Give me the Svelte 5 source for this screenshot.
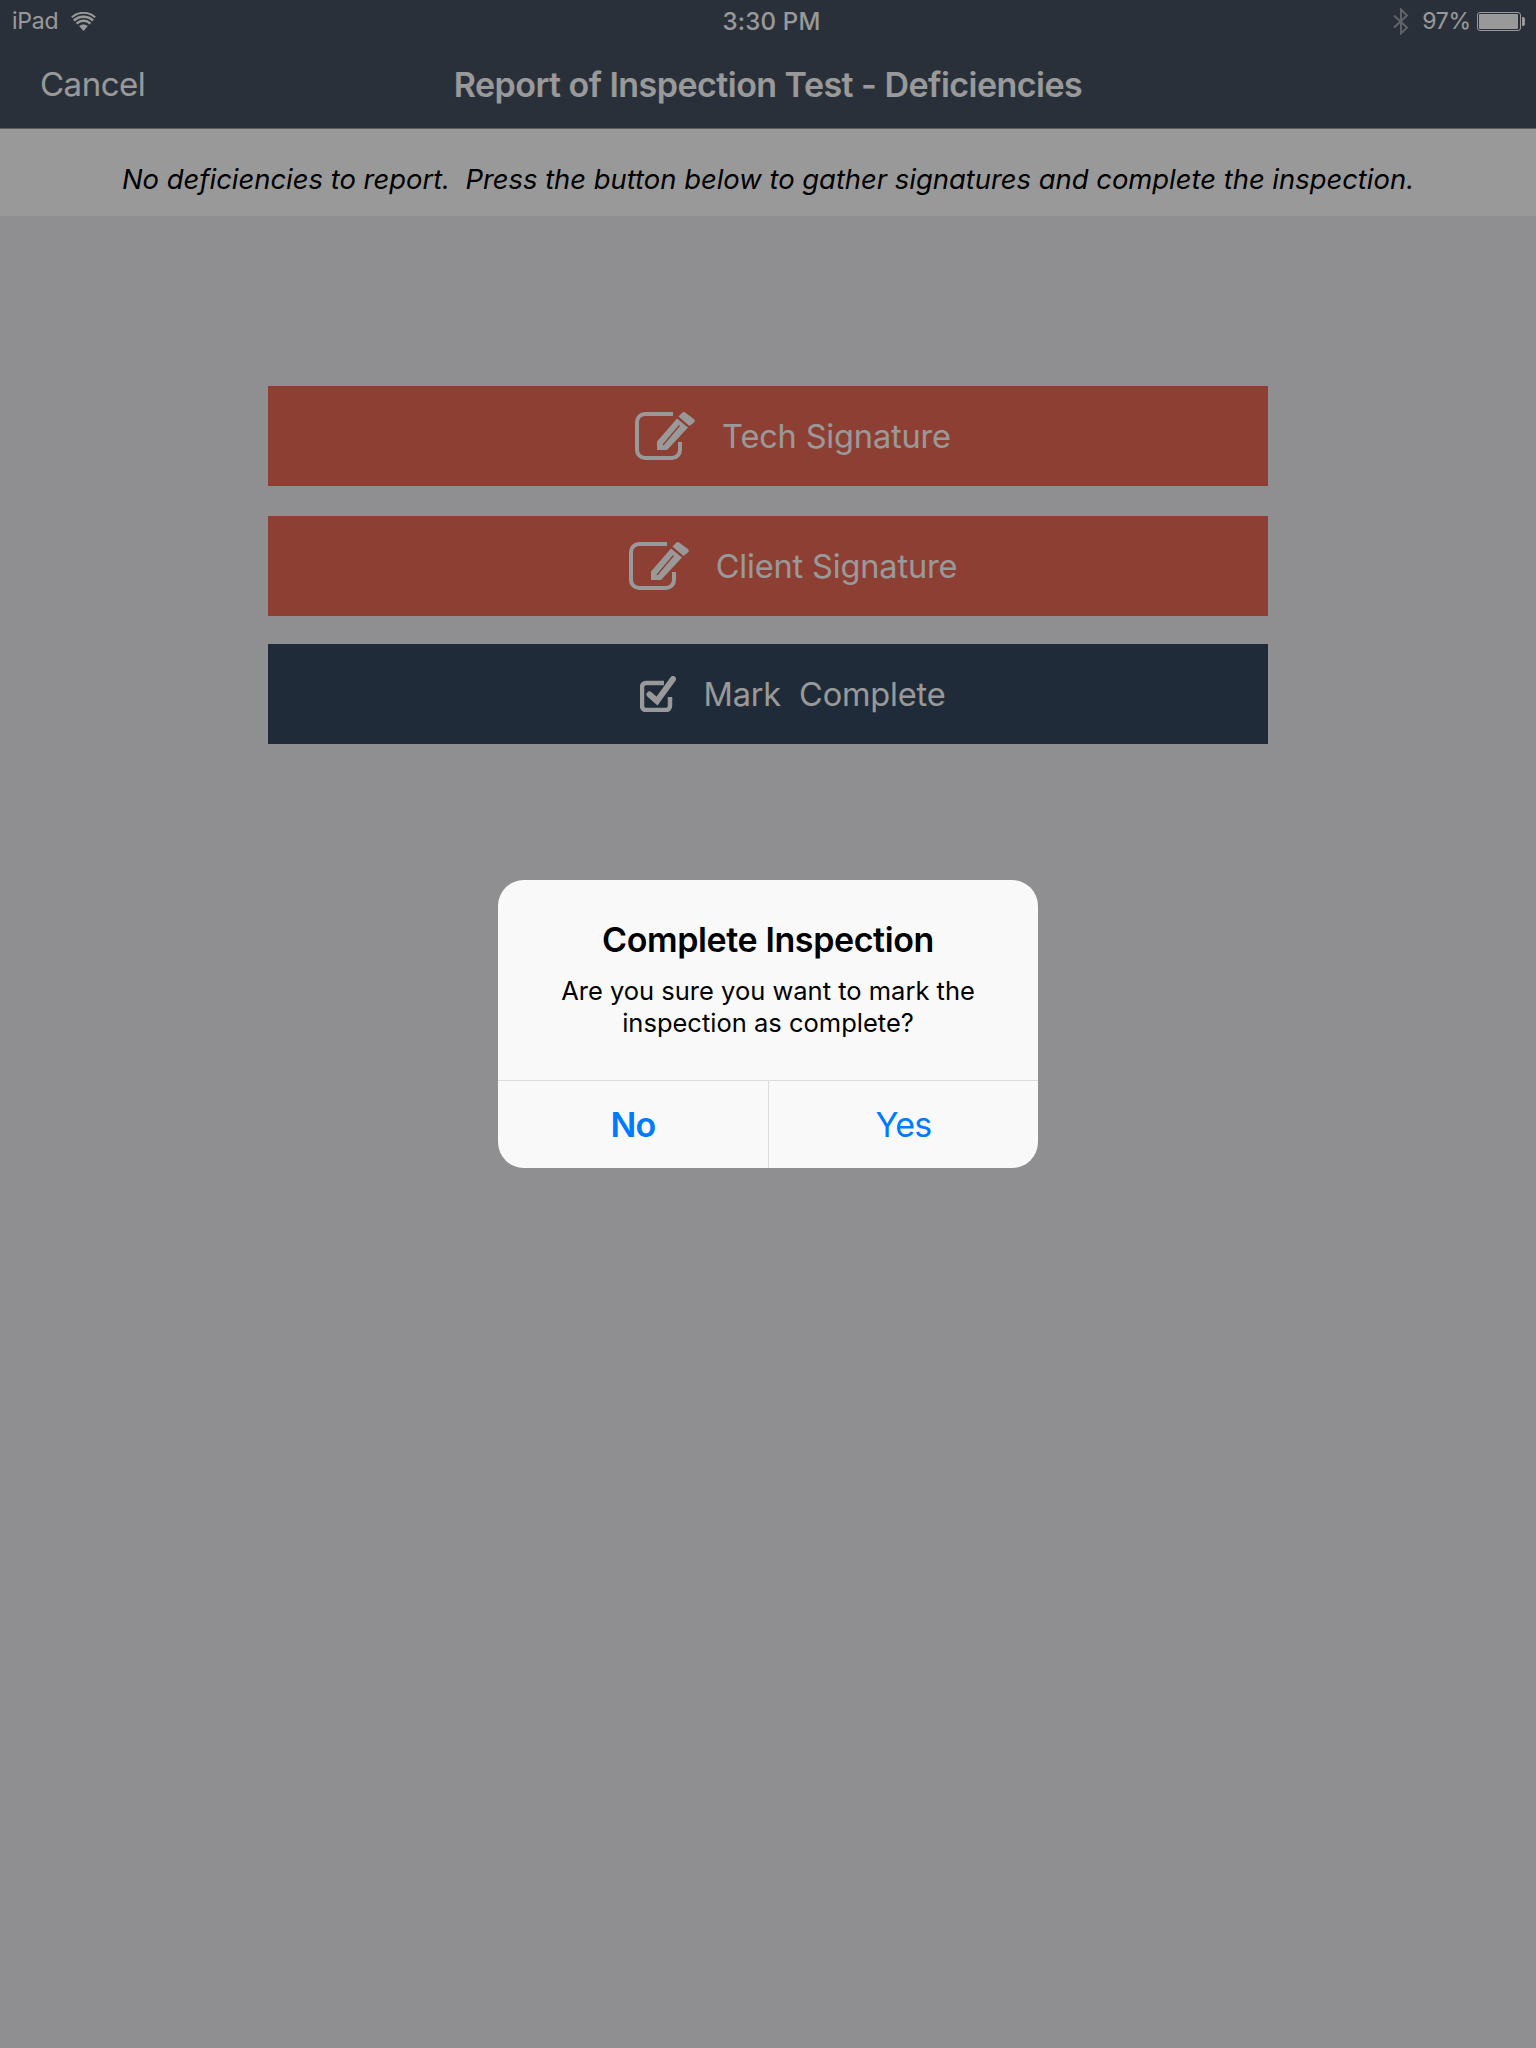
<script lang="ts">
  let showDialog = $state(true);

  const actions = [
    { label: 'Tech Signature', icon: 'edit', tone: 'red' },
    { label: 'Client Signature', icon: 'edit', tone: 'red' },
    { label: 'Mark  Complete', icon: 'check', tone: 'navy' }
  ];
</script>

<div class="page">
  <header class="top">
    <div class="status">
      <div class="status-left">
        <span>iPad</span>
        <svg class="wifi" width="25" height="19" viewBox="0 0 24 18">
          <path d="M12 18L7.800 13.400C10.200 11.300 13.800 11.300 16.200 13.400Z" fill="currentColor" />
          <path d="M5.400 11C9.200 7.500 14.800 7.500 18.600 11" fill="none" stroke="currentColor" stroke-width="2.400" />
          <path d="M2.800 8C8 3.200 16 3.200 21.200 8" fill="none" stroke="currentColor" stroke-width="2.400" />
          <path d="M.8 5C7.200-.8 16.800-.8 23.200 5" fill="none" stroke="currentColor" stroke-width="2" />
        </svg>
      </div>
      <span class="time">3:30 PM</span>
      <div class="status-right">
        <svg class="bt" width="18" height="27" viewBox="0 0 18 27">
          <path d="M2 7.500L15 19.500L9 25.500V1.500L15 7.500L2 19.500" fill="none" stroke="currentColor" stroke-width="2" />
        </svg>
        <span class="pct">97%</span>
        <div class="battery"><div class="level"></div></div>
      </div>
    </div>
    <div class="nav">
      <span class="cancel">Cancel</span>
      <span class="title">Report of Inspection Test - Deficiencies</span>
    </div>
  </header>

  <div class="notice">No deficiencies to report.  Press the button below to gather signatures and complete the inspection.</div>

  <main class="actions">
    {#each actions as action}
      <button class="action {action.tone}">
        {#if action.icon === 'edit'}
          <svg width="60" height="48" viewBox="0 0 60 48">
            <path d="M38 2H10a8 8 0 0 0-8 8V38a8 8 0 0 0 8 8H37a8 8 0 0 0 8-8V30" fill="none" stroke="currentColor" stroke-width="4" />
            <path fill-rule="evenodd" d="M22 38V29.500L42 6.500L53 15.500L32 38ZM27.500 32.500L44 13L45 14L28.500 33.500Z" fill="currentColor" />
            <path d="M43.500 4.500L47.500.5C48.500-.2 49.500 0 50.500.8L58.800 7C60 8 60.200 9.200 59.200 10.200L54.500 14Z" fill="currentColor" />
          </svg>
        {:else}
          <svg width="36" height="36" viewBox="0 0 36 36">
            <path d="M24 7H6a4 4 0 0 0-4 4V30a4 4 0 0 0 4 4H26a4 4 0 0 0 4-4V21" fill="none" stroke="currentColor" stroke-width="4.500" />
            <path d="M9.500 18.500L17 25L33 3" fill="none" stroke="currentColor" stroke-width="6" stroke-linecap="round" />
          </svg>
        {/if}
        <span>{action.label}</span>
      </button>
    {/each}
  </main>

  {#if showDialog}
    <div class="scrim">
      <div class="dialog">
        <div class="body">
          <h2>Complete Inspection</h2>
          <p>Are you sure you want to mark the<br />inspection as complete?</p>
        </div>
        <div class="choices">
          <button class="strong" onclick={() => (showDialog = false)}>No</button>
          <button onclick={() => (showDialog = false)}>Yes</button>
        </div>
      </div>
    </div>
  {/if}
</div>

<style>
  :global(body) {
    margin: 0;
    background: #efeff4;
  }

  .page {
    position: relative;
    width: 1536px;
    height: 2048px;
    overflow: hidden;
    font-family: Inter, "Liberation Sans", sans-serif;
    background: #efeff4;
  }

  .top {
    height: 128px;
    background: #46515f;
    color: #fff;
    box-sizing: content-box;
    border-bottom: 1px solid #9b9b9b;
  }

  .status {
    height: 40px;
    box-sizing: border-box;
    display: grid;
    grid-template-columns: 1fr auto 1fr;
    align-items: center;
    padding: 2px 11px 0 12px;
    font-size: 23px;
    letter-spacing: -0.2px;
  }

  .status-left {
    display: flex;
    align-items: center;
    gap: 13px;
  }

  .time {
    font-size: 24px;
    font-weight: 500;
    letter-spacing: 0.2px;
    padding-left: 6px;
  }

  .status-right {
    display: flex;
    align-items: center;
    justify-content: flex-end;
  }

  .bt {
    color: #9fa5ac;
    margin-right: 12px;
  }

  .pct {
    margin-right: 6px;
  }

  .battery {
    position: relative;
    width: 44px;
    height: 19px;
    box-sizing: border-box;
    border: 1px solid #fff;
    border-radius: 3px;
    padding: 1px;
    margin-right: 4px;
  }

  .battery::after {
    content: "";
    position: absolute;
    right: -5px;
    top: 4px;
    width: 3px;
    height: 9px;
    background: #fff;
    border-radius: 0 2px 2px 0;
  }

  .level {
    height: 100%;
    width: 97%;
    background: #fff;
    border-radius: 1px;
  }

  .nav {
    position: relative;
    height: 88px;
    display: flex;
    align-items: center;
    justify-content: center;
  }

  .cancel {
    position: absolute;
    left: 40px;
    font-size: 33px;
    letter-spacing: -0.5px;
  }

  .title {
    font-size: 34px;
    font-weight: 600;
    letter-spacing: -0.53px;
  }

  .notice {
    height: 87px;
    box-sizing: border-box;
    padding-top: 12px;
    display: flex;
    align-items: center;
    justify-content: center;
    background: #fff;
    color: #000;
    font-size: 27.4px;
    font-style: italic;
    white-space: pre;
  }

  .actions {
    width: 1000px;
    margin: 170px auto 0;
    display: flex;
    flex-direction: column;
    gap: 28px;
  }

  .action {
    height: 100px;
    display: flex;
    align-items: center;
    justify-content: center;
    gap: 27px;
    padding: 0 0 0 50px;
    border: none;
    color: #fff;
    font-family: inherit;
    font-size: 32.500px;
    letter-spacing: -0.15px;
    white-space: pre;
  }

  .action:first-child {
    margin-bottom: 2px;
  }

  .red {
    background: #ed6955;
  }

  .navy {
    background: #34485e;
  }

  .scrim {
    position: absolute;
    inset: 0;
    display: flex;
    align-items: center;
    justify-content: center;
    background: rgba(0, 0, 0, 0.4);
  }

  .dialog {
    width: 540px;
    height: 288px;
    display: flex;
    flex-direction: column;
    background: #f9f9f9;
    border-radius: 26px;
    overflow: hidden;
  }

  .body {
    flex: 1;
    text-align: center;
    color: #000;
  }

  h2 {
    margin: 39px 0 0;
    font-size: 34px;
    line-height: 41px;
    font-weight: 600;
    letter-spacing: -0.4px;
  }

  p {
    margin: 15px 0 0;
    font-size: 25.500px;
    line-height: 32px;
  }

  .choices {
    height: 87px;
    display: grid;
    grid-template-columns: 1fr 1fr;
    border-top: 1px solid #dcdcde;
  }

  .choices button {
    border: none;
    background: none;
    color: #007aff;
    font-family: inherit;
    font-size: 34px;
    letter-spacing: -0.8px;
  }

  .choices button + button {
    border-left: 1px solid #dcdcde;
  }

  .strong {
    font-weight: 600;
  }
</style>
